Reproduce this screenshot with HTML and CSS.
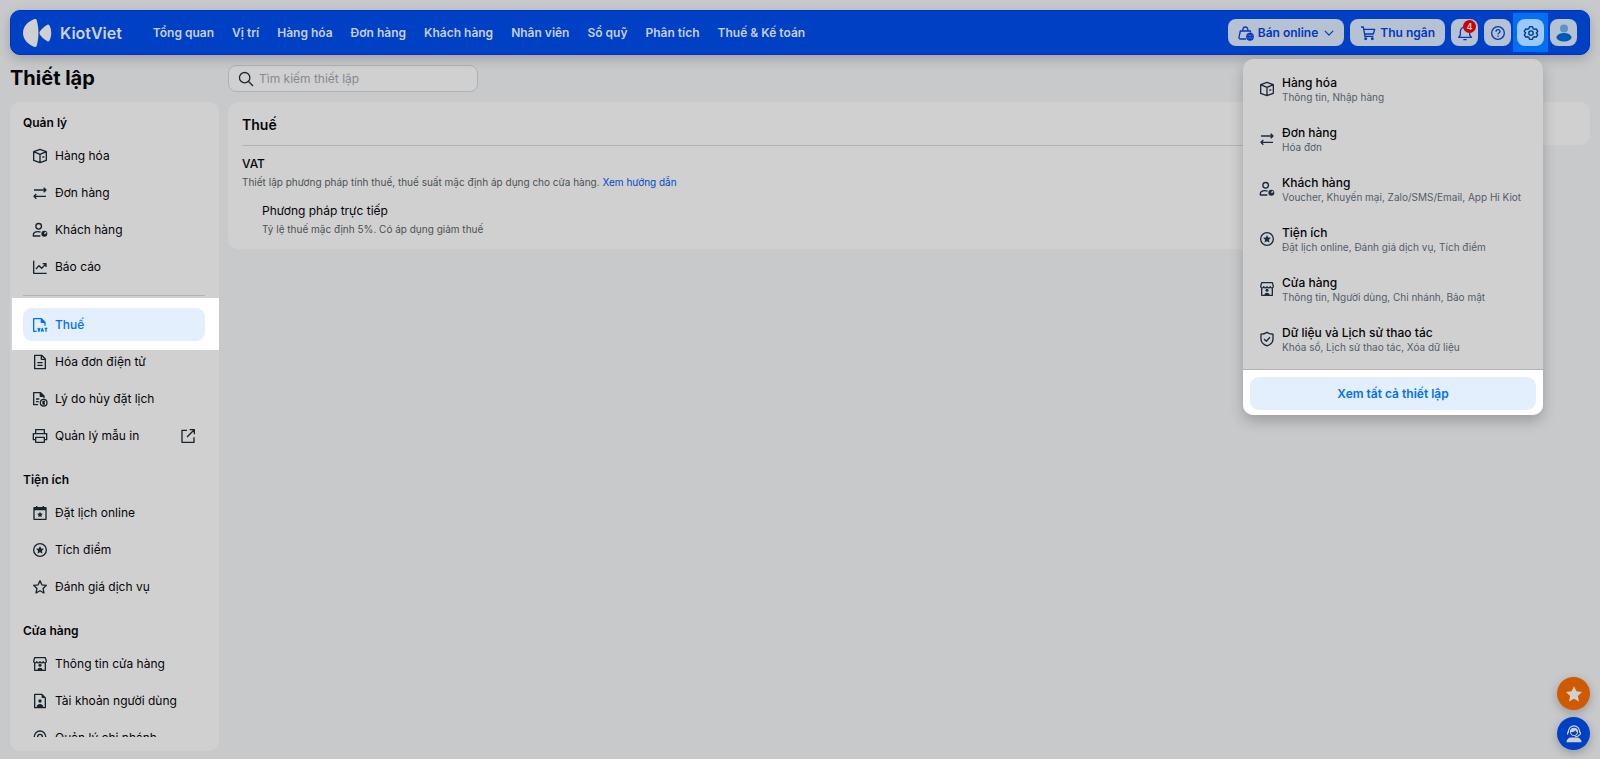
FILE: index.html
```html
<!DOCTYPE html>
<html lang="vi">
<head>
<meta charset="utf-8">
<meta name="viewport" content="width=device-width, initial-scale=1">
<title>KiotViet - Thiết lập</title>
<link rel="stylesheet" href="styles.css">
</head>
<body>
<svg class="sprite" aria-hidden="true">
  <symbol id="box" viewBox="0 0 24 24"><path d="M12 2 21.500 5.500v13L12 22l-9.500-3.500v-13zM2.500 5.500 12 9.500l9.500-4M12 9.500V22M15.500 14l3-1.200"/></symbol>
  <symbol id="swap" viewBox="0 0 24 24"><path d="M3 7.500h18M17.500 4l3.500 3.500-3.500 3.500M21 17H3M6.500 13.500 3 17l3.500 3.500"/></symbol>
  <symbol id="customer" viewBox="0 0 24 24"><circle cx="10" cy="6.500" r="4.200"/><path d="M12.500 21H2v-1.500c0-3 3-5 7-5 1.500 0 2.700.2 3.800.7"/><circle class="solid" cx="18.500" cy="17.500" r="4.500"/><path class="cut" d="m18.500 17.500 2.800-2"/></symbol>
  <symbol id="chart" viewBox="0 0 24 24"><path d="M2.500 2.500V21.500H22M6 15l4.500-5 4 4L20.500 7.500M16 7h5v5"/></symbol>
  <symbol id="vat" viewBox="0 0 24 24"><path d="M7 21.500H2.500v-19H14l5.500 5.500v5M14 3v5h5"/><path class="solid" d="M14 3v5h5z"/><path d="m9 16.500 1.500 5L12 16.500M14 22l1.500-5 1.500 5M19 17h4M21 17v5"/></symbol>
  <symbol id="doc" viewBox="0 0 24 24"><path d="M4 2h10.500L20 7.500V22H4zM14 2.500V8h5.500M8 13h8M8 17h8"/></symbol>
  <symbol id="reason" viewBox="0 0 24 24"><path d="M9 20.500H2.500v-18H13l5 5V11M12.500 3v5H18M6 12h5M6 16h4"/><path class="solid" d="M13 3v5h5z"/><circle cx="17.500" cy="17.500" r="5"/><path d="M19.500 15.500h-3v4h3M16.500 17.500h2.500"/></symbol>
  <symbol id="print" viewBox="0 0 24 24"><path d="M5.500 8V2.500h13V8M5.500 17.500H2V8.500h20v9h-3.500M5.500 14h13v7.500h-13z"/></symbol>
  <symbol id="external" viewBox="0 0 24 24"><path d="M10.500 3.500H3v18h18V14M14.500 2.500h7v7M21 3 10.500 13.500"/></symbol>
  <symbol id="calendar" viewBox="0 0 24 24"><path d="M3 4h18v17.500H3zM7 1.500V5M17 1.500V5"/><path class="solid" d="M3 4h18v4H3zM12 10l1.300 2.700 3 .4-2.200 2.100.6 3-2.700-1.500-2.700 1.500.6-3-2.200-2.100 3-.4z"/></symbol>
  <symbol id="point" viewBox="0 0 24 24"><circle cx="12" cy="12" r="9.500"/><path class="solid" d="m12 6 1.800 3.800 4.100.5-3 2.900.8 4.200-3.700-2-3.700 2 .8-4.200-3-2.900 4.100-.5z"/></symbol>
  <symbol id="star" viewBox="0 0 24 24"><path d="m12 2.500 2.800 6.200 6.800.8-5 4.700 1.300 6.800L12 17.600 6.100 21l1.300-6.800-5-4.700 6.800-.8z"/></symbol>
  <symbol id="store" viewBox="0 0 24 24"><path d="M4 2.500h16L21.500 8c0 3-3.500 3-4.700.5-1 2.500-3.800 2.500-4.800 0-1 2.500-3.800 2.500-4.800 0C6 11 2.500 11 2.500 8zM4 11v10.500h16V11"/><circle class="solid" cx="12" cy="14" r="2.300"/><path class="solid" d="M8 21.500c0-5 8-5 8 0z"/></symbol>
  <symbol id="account" viewBox="0 0 24 24"><path d="M4 2h10.500L20 7.500V22H4z"/><path class="solid" d="M14.500 2v5.500H20zM7 21.500c0-6.500 10-6.500 10 0z"/><circle class="solid" cx="12" cy="12" r="2.500"/></symbol>
  <symbol id="pin" viewBox="0 0 24 24"><path d="M12 22.500C7 18 3.500 14 3.500 10a8.500 8.500 0 0 1 17 0c0 4-3.500 8-8.500 12.500z"/><circle cx="12" cy="10" r="3.500"/></symbol>
  <symbol id="shield" viewBox="0 0 24 24"><path d="M12 2c3 2 6 2.800 9 2.800V12c0 4.800-4 8.500-9 10.300C7 20.500 3 16.800 3 12V4.800C6 4.800 9 4 12 2zM7.500 12l3.500 3.300 5.500-6"/></symbol>
  <symbol id="search" viewBox="0 0 24 24"><circle cx="10" cy="10" r="7.800"/><path d="m15.500 15.500 7 7"/></symbol>
  <symbol id="bag" viewBox="0 0 24 24"><path d="M12 21H3.500a2 2 0 0 1-2-2.300L3.500 9h15l.5 2.500M7 9c0-8 8-8 8 0"/><circle cx="18" cy="17.500" r="4.800"/><path d="M13 17.500h10M18 12.500c-2.500 3-2.500 7 0 10 2.500-3 2.500-7 0-10"/></symbol>
  <symbol id="cart" viewBox="0 0 24 24"><path d="M1.500 3H5l2.500 14H20M5.500 6.500H22L20 13.500H7"/><circle cx="8.500" cy="20.500" r="1.200"/><circle cx="18.500" cy="20.500" r="1.200"/></symbol>
  <symbol id="chevron" viewBox="0 0 24 24"><path d="m2 7 10 10L22 7"/></symbol>
  <symbol id="bell" viewBox="0 0 24 24"><path d="M2.500 18.500 5 15V10c0-9 14-9 14 0v5l2.500 3.500zM9.500 22h5"/></symbol>
  <symbol id="help" viewBox="0 0 24 24"><circle cx="12" cy="12" r="9.500"/><path d="M9 10c0-4 6-4 6-.3 0 2.300-3 2.300-3 4.300M12 15.800v2"/></symbol>
  <symbol id="gear" viewBox="0 0 24 24"><path d="M9.800 2.500h4.400l1 3 1.600.9 3.100-.7 2.200 3.900L20 12l2.100 2.400-2.200 3.900-3.100-.7-1.600.9-1 3H9.800l-1-3-1.600-.9-3.100.7-2.200-3.900L4 12 1.900 9.600l2.200-3.900 3.100.7 1.600-.9z"/><circle cx="12" cy="12" r="3.300"/></symbol>
</svg>

<header class="topbar">
  <a class="brand" href="#">
    <svg class="brand-mark" viewBox="0 0 29 28" aria-hidden="true"><path d="M11 .3c1.500-.6 2.300-.2 2.800 1.200 2.200 8 2.200 17 0 25-.5 1.400-1.300 1.800-2.800 1.200C5 25.500 0 20.500 0 14S5 2.500 11 .3zM23.500 6.200c1.200-.9 2.300-.8 3 .4 2.300 4.400 2.300 10.400 0 14.800-.7 1.200-1.800 1.300-3 .4-3-2-5.400-4.300-6.600-6.300-.6-1-.6-2 0-3 1.200-2 3.600-4.300 6.600-6.300z"/></svg>
    KiotViet
  </a>
  <nav class="main-nav">
    <a href="#">Tổng quan</a>
    <a href="#">Vị trí</a>
    <a href="#">Hàng hóa</a>
    <a href="#">Đơn hàng</a>
    <a href="#">Khách hàng</a>
    <a href="#">Nhân viên</a>
    <a href="#">Sổ quỹ</a>
    <a href="#">Phân tích</a>
    <a href="#">Thuế &amp; Kế toán</a>
  </nav>
  <div class="actions">
    <button class="action wide" type="button"><svg class="icon"><use href="#bag"/></svg>Bán online<svg class="icon small"><use href="#chevron"/></svg></button>
    <button class="action wide" type="button"><svg class="icon"><use href="#cart"/></svg>Thu ngân</button>
    <button class="action" type="button" aria-label="Thông báo"><svg class="icon"><use href="#bell"/></svg><span class="badge">4</span></button>
    <button class="action" type="button" aria-label="Trợ giúp"><svg class="icon"><use href="#help"/></svg></button>
    <div class="gear-spot"><button class="action active" type="button" aria-label="Thiết lập"><svg class="icon"><use href="#gear"/></svg></button></div>
    <button class="action" type="button" aria-label="Tài khoản"><svg class="avatar" viewBox="0 0 16 18"><circle class="head" cx="8" cy="4.500" r="4"/><ellipse class="torso" cx="8" cy="13.200" rx="7.500" ry="4.300"/></svg></button>
  </div>

  <section class="settings-menu" aria-label="Menu thiết lập">
    <ul>
      <li><a href="#"><svg class="icon"><use href="#box"/></svg><span><b>Hàng hóa</b><small>Thông tin, Nhập hàng</small></span></a></li>
      <li><a href="#"><svg class="icon"><use href="#swap"/></svg><span><b>Đơn hàng</b><small>Hóa đơn</small></span></a></li>
      <li><a href="#"><svg class="icon"><use href="#customer"/></svg><span><b>Khách hàng</b><small>Voucher, Khuyến mại, Zalo/SMS/Email, App Hi Kiot</small></span></a></li>
      <li><a href="#"><svg class="icon"><use href="#point"/></svg><span><b>Tiện ích</b><small>Đặt lịch online, Đánh giá dịch vụ, Tích điểm</small></span></a></li>
      <li><a href="#"><svg class="icon"><use href="#store"/></svg><span><b>Cửa hàng</b><small>Thông tin, Người dùng, Chi nhánh, Bảo mật</small></span></a></li>
      <li><a href="#"><svg class="icon"><use href="#shield"/></svg><span><b>Dữ liệu và Lịch sử thao tác</b><small>Khóa sổ, Lịch sử thao tác, Xóa dữ liệu</small></span></a></li>
    </ul>
    <div class="menu-footer"><button type="button">Xem tất cả thiết lập</button></div>
  </section>
</header>

<div class="page-head">
  <h1>Thiết lập</h1>
  <label class="search">
    <svg class="icon"><use href="#search"/></svg>
    <input type="text" placeholder="Tìm kiếm thiết lập" aria-label="Tìm kiếm thiết lập">
  </label>
</div>

<div class="workspace">
  <aside class="sidebar">
    <div class="scroller">
      <h2>Quản lý</h2>
      <ul class="links">
        <li><a href="#"><svg class="icon"><use href="#box"/></svg>Hàng hóa</a></li>
        <li><a href="#"><svg class="icon"><use href="#swap"/></svg>Đơn hàng</a></li>
        <li><a href="#"><svg class="icon"><use href="#customer"/></svg>Khách hàng</a></li>
        <li><a href="#"><svg class="icon"><use href="#chart"/></svg>Báo cáo</a></li>
      </ul>
      <hr>
      <ul class="links">
        <li class="spot"><a class="current" href="#"><svg class="icon"><use href="#vat"/></svg>Thuế</a></li>
        <li><a href="#"><svg class="icon"><use href="#doc"/></svg>Hóa đơn điện tử</a></li>
        <li><a href="#"><svg class="icon"><use href="#reason"/></svg>Lý do hủy đặt lịch</a></li>
        <li><a href="#"><svg class="icon"><use href="#print"/></svg>Quản lý mẫu in<svg class="icon trail"><use href="#external"/></svg></a></li>
      </ul>
      <h2>Tiện ích</h2>
      <ul class="links">
        <li><a href="#"><svg class="icon"><use href="#calendar"/></svg>Đặt lịch online</a></li>
        <li><a href="#"><svg class="icon"><use href="#point"/></svg>Tích điểm</a></li>
        <li><a href="#"><svg class="icon"><use href="#star"/></svg>Đánh giá dịch vụ</a></li>
      </ul>
      <h2>Cửa hàng</h2>
      <ul class="links">
        <li><a href="#"><svg class="icon"><use href="#store"/></svg>Thông tin cửa hàng</a></li>
        <li><a href="#"><svg class="icon"><use href="#account"/></svg>Tài khoản người dùng</a></li>
        <li><a href="#"><svg class="icon"><use href="#pin"/></svg>Quản lý chi nhánh</a></li>
      </ul>
    </div>
  </aside>

  <main class="content">
    <div class="card-head"><h2>Thuế</h2></div>
    <div class="card-body">
      <div class="tax">
        <h3>VAT</h3>
        <p>Thiết lập phương pháp tính thuế, thuế suất mặc định áp dụng cho cửa hàng. <a href="#">Xem hướng dẫn</a></p>
        <div class="method">
          <h4>Phương pháp trực tiếp</h4>
          <p>Tỷ lệ thuế mặc định 5%. Có áp dụng giảm thuế</p>
        </div>
      </div>
    </div>
  </main>
</div>

<div class="floaters">
  <button class="rate" type="button" aria-label="Đánh giá"><svg viewBox="0 0 24 24"><path d="m12 1.500 3.200 6.800 7.500 1-5.500 5.200 1.400 7.500-6.600-3.600L5.400 22l1.400-7.500L1.300 9.300l7.500-1z"/></svg></button>
  <button class="support" type="button" aria-label="Hỗ trợ"><svg viewBox="0 0 24 24"><path d="M2 23c0-4 3-6.500 7-6.500h6c4 0 7 2.500 7 6.500z"/><circle cx="12" cy="9" r="5.500"/><path class="line" d="M4.500 10.500C3.500-2 20.500-2 19.500 10.500M3.500 9v4M20.500 9v4M19.500 12.500c-1 2.500-3 3-6 3"/><path class="face" d="M8 9.500c3 0 5-.7 6-2.500.5 1.500 1 2 2 2.500 0 5-8 5-8 0z"/></svg></button>
</div>
</body>
</html>
```
FILE: styles.css
```css
* { box-sizing: border-box; }

body {
  display: flex;
  flex-direction: column;
  height: 100vh;
  margin: 0;
  padding: 10px 10px 8px;
  background: #c8c9cb;
  color: #050508;
  font-family: Inter, "Noto Sans", sans-serif;
  font-size: 12px;
  line-height: 16px;
}

h1, h2, h3, h4, p, ul { margin: 0; padding: 0; }
ul { list-style: none; }
a { color: inherit; text-decoration: none; }
button, input { font: inherit; color: inherit; border: 0; }
button { cursor: pointer; }

.sprite { position: absolute; width: 0; height: 0; }

.icon {
  flex: none;
  width: 16px;
  height: 16px;
  fill: none;
  stroke: currentColor;
  stroke-width: 2;
  stroke-linejoin: round;
  overflow: visible;
}
.solid { fill: currentColor; stroke: none; }
.cut { stroke: #d0d0d0; }

/* Top bar */
.topbar {
  position: relative;
  z-index: 2;
  display: flex;
  align-items: center;
  flex: none;
  height: 45px;
  padding: 0 12px;
  border: 1px solid #0030bd;
  border-radius: 10px;
  background: #0040c4;
  box-shadow: 0 4px 12px rgba(0, 0, 0, 0.2);
  color: #c7cfdf;
  font-weight: 600;
}
.brand {
  display: flex;
  align-items: center;
  gap: 8px;
  margin-right: 31px;
  color: #d0d0d0;
  font-size: 16px;
}
.brand-mark { width: 29px; height: 28px; fill: #d0d0d0; }
.main-nav { display: flex; gap: 18px; white-space: nowrap; }
.actions { display: flex; align-items: center; gap: 6px; margin-left: auto; }
.action {
  position: relative;
  display: flex;
  align-items: center;
  justify-content: center;
  width: 27px;
  height: 27px;
  padding: 0;
  border-radius: 8px;
  background: #b6c1d1;
  color: #0038bf;
  white-space: nowrap;
}
.action.wide { gap: 4px; width: auto; padding: 0 10px; font-weight: 600; }
.action .small { width: 10px; height: 10px; margin-left: 2px; stroke-width: 3; }
.badge {
  position: absolute;
  top: 1px;
  right: 2px;
  width: 13px;
  height: 13px;
  border-radius: 50%;
  background: #cf0000;
  color: #e4d4d4;
  font-size: 9px;
  line-height: 13px;
  text-align: center;
}
.gear-spot {
  margin: 0 -4px;
  padding: 6px 4px;
  background: #0070f4;
}
.action.active { background: #9cc8fc; color: #003a80; }
.avatar { width: 16px; height: 18px; }
.head { fill: #5e92c9; }
.torso { fill: #0058bd; }

/* Settings drop-down */
.settings-menu {
  position: absolute;
  top: 48px;
  right: 46px;
  width: 300px;
  overflow: hidden;
  border-radius: 10px;
  background: #d0d0d0;
  box-shadow: 0 6px 14px rgba(0, 0, 0, 0.22);
  color: #050508;
  font-weight: 400;
}
.settings-menu ul { padding: 5px 0; }
.settings-menu li a {
  display: flex;
  align-items: center;
  gap: 7px;
  height: 50px;
  padding: 0 16px;
}
.settings-menu li span { padding-top: 1px; }
.settings-menu .icon { color: #1c2a40; }
.settings-menu b { display: block; font-weight: 500; line-height: 14px; }
.settings-menu small {
  display: block;
  color: #535d6b;
  font-size: 10px;
  line-height: 14px;
  white-space: nowrap;
}
.menu-footer {
  padding: 7px 7px 5px;
  border-top: 1px solid #b2b2b2;
  background: #fff;
}
.menu-footer button {
  width: 100%;
  height: 33px;
  border-radius: 9px;
  background: #e3effc;
  color: #0070f4;
  font-weight: 600;
}

/* Heading row */
.page-head {
  display: flex;
  align-items: center;
  flex: none;
  height: 47px;
}
h1 { width: 218px; font-size: 20px; line-height: 24px; font-weight: 700; padding-bottom: 2px; }
.search {
  display: flex;
  align-items: center;
  gap: 5px;
  width: 250px;
  height: 27px;
  padding: 0 9px;
  border: 1px solid #afb1b6;
  border-radius: 8px;
  background: #d0d0d0;
  color: #1c2a33;
}
.search input { width: 100%; padding: 0; outline: 0; background: transparent; }
.search input::placeholder { color: #858a91; opacity: 1; }

/* Sidebar */
.workspace {
  display: flex;
  align-items: stretch;
  gap: 9px;
  flex: 1;
  min-height: 0;
}
.sidebar {
  display: flex;
  flex: none;
  width: 209px;
  padding: 13px 0 14px;
  border-radius: 10px;
  background: #d0d0d0;
}
.scroller {
  flex: 1;
  padding: 0 14px 0 13px;
  overflow-y: auto;
  scrollbar-width: none;
}
.scroller h2 { margin-bottom: 8px; font-size: 12px; font-weight: 600; }
.links { display: flex; flex-direction: column; gap: 4px; margin-bottom: 20px; }
.links a {
  display: flex;
  align-items: center;
  gap: 7px;
  height: 33px;
  padding: 0 9px;
  border-radius: 9px;
}
.links .icon { color: #16242e; }
.links .trail { margin-left: auto; }
.scroller hr {
  height: 1px;
  margin: -8px 0 12px;
  border: 0;
  background: #b2b3b5;
}
.links .spot {
  margin: -10px -14px -9px -11px;
  padding: 10px 14px 9px 11px;
  background: #fff;
}
.current { background: #e3effc; color: #0070f4; font-weight: 500; }
.links .current .icon { color: #0070f4; }

/* Content */
.content { flex: 1; min-width: 0; }
.card-head {
  padding: 0 14px;
  border-radius: 10px 10px 10px 0;
  background: #d0d0d0;
}
.card-head h2 {
  padding: 14px 0 11px;
  font-size: 14px;
  line-height: 18px;
  font-weight: 600;
}
.card-body {
  margin-right: 200px;
  padding: 0 14px;
  border-radius: 0 0 10px 10px;
  background: #d0d0d0;
}
.tax { padding: 10px 0 13px; border-top: 1px solid #b2b3b5; }
.card-body h3, .card-body h4 { font-size: 12px; font-weight: 500; }
.card-body h4 { font-weight: 400; }
.card-body p { margin-top: 3px; color: #4c5254; font-size: 10px; line-height: 14px; }
.card-body p a { color: #0048c4; }
.method { margin-top: 14px; padding-left: 20px; }

/* Floating buttons */
.floaters {
  position: fixed;
  right: 10px;
  bottom: 9px;
  display: flex;
  flex-direction: column;
  gap: 7px;
}
.floaters button {
  display: grid;
  place-items: center;
  width: 33px;
  height: 33px;
  padding: 0;
  border-radius: 50%;
  box-shadow: 0 3px 10px rgba(0, 0, 0, 0.25);
}
.floaters svg { width: 18px; height: 18px; fill: #d0d0d0; }
.rate { background: #d05a00; }
.support { background: #0040c4; }
.floaters .line { fill: none; stroke: #d0d0d0; stroke-width: 1.500; }
.floaters .face { fill: #0040c4; }
```
